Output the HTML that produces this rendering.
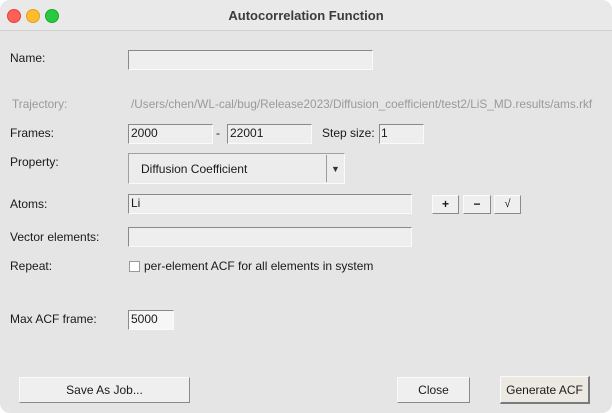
<!DOCTYPE html>
<html><head><meta charset="utf-8"><style>
html,body{margin:0;padding:0;width:612px;height:413px;background:#fff;overflow:hidden}
body{font-family:"Liberation Sans",sans-serif;font-size:12px;color:#1a1a1a}
.win{position:absolute;left:0;top:0;width:612px;height:413px;background:#e5e5e5;border-radius:10px;overflow:hidden}
.tb{position:absolute;left:0;top:0;width:612px;height:30px;background:#e9e9e9;border-bottom:1px solid #cfcfcf}
.dot{position:absolute;top:9px;width:12px;height:12px;border-radius:50%}
.title{position:absolute;left:0;width:612px;top:8px;text-align:center;font-weight:bold;font-size:13px;color:#3b3b3b}
.a{position:absolute;white-space:nowrap}
.in{position:absolute;background:#eeeeee;border:1px solid #fafafa;border-top-color:#8a8a8a;border-left-color:#8a8a8a;box-sizing:border-box;padding-left:2px;line-height:17px;font-size:12px}
.btn{position:absolute;background:#efefef;border:1px solid #fafafa;border-right-color:#8a8a8a;border-bottom-color:#8a8a8a;box-sizing:border-box;text-align:center;font-size:12px}
</style></head><body>
<div class="win">
<div class="tb">
<div class="dot" style="left:7px;background:#fe5f57;border:0.5px solid #e0443e"></div>
<div class="dot" style="left:26px;background:#febc2e;border:0.5px solid #dea123"></div>
<div class="dot" style="left:45px;background:#28c840;border:0.5px solid #1aab29"></div>
<div class="title">Autocorrelation Function</div>
</div>

<div class="a" style="left:10px;top:51px">Name:</div>
<div class="in" style="left:128px;top:50px;width:245px;height:20px"></div>

<div class="a" style="left:12px;top:97px;color:#9a9a9a;font-size:11.8px">Trajectory:</div>
<div class="a" style="left:131px;top:97px;color:#9a9a9a;font-size:11.8px">/Users/chen/WL-cal/bug/Release2023/Diffusion_coefficient/test2/LiS_MD.results/ams.rkf</div>

<div class="a" style="left:10px;top:126px">Frames:</div>
<div class="in" style="left:128px;top:124px;width:85px;height:20px">2000</div>
<div class="a" style="left:216px;top:126px">-</div>
<div class="in" style="left:227px;top:124px;width:85px;height:20px">22001</div>
<div class="a" style="left:322px;top:126px">Step size:</div>
<div class="in" style="left:379px;top:124px;width:45px;height:20px;padding-left:1px">1</div>

<div class="a" style="left:10px;top:155px">Property:</div>
<div class="btn" style="left:128px;top:153px;width:217px;height:31px;border-color:#a0a0a0;border-right-color:#fafafa;border-bottom-color:#fafafa;border-top-color:#a0a0a0;background:#ececec"></div>
<div class="a" style="left:141px;top:162px">Diffusion Coefficient</div>
<div style="position:absolute;left:326px;top:155px;width:1px;height:27px;background:#9a9a9a"></div>
<div class="a" style="left:331px;top:164px;font-size:9px;color:#333">▼</div>

<div class="a" style="left:10px;top:197px">Atoms:</div>
<div class="in" style="left:128px;top:194px;width:284px;height:20px">Li</div>
<div class="btn" style="left:432px;top:195px;width:27px;height:19px;font-weight:bold;line-height:16px">+</div>
<div class="btn" style="left:463px;top:195px;width:28px;height:19px;font-weight:bold;line-height:16px">−</div>
<div class="btn" style="left:494px;top:195px;width:27px;height:19px;line-height:17px;font-size:11px">√</div>

<div class="a" style="left:10px;top:230px">Vector elements:</div>
<div class="in" style="left:128px;top:227px;width:284px;height:20px"></div>

<div class="a" style="left:10px;top:259px">Repeat:</div>
<div style="position:absolute;left:129px;top:261px;width:11px;height:11px;background:#fff;border:1px solid #999;box-sizing:border-box"></div>
<div class="a" style="left:144px;top:259px">per-element ACF for all elements in system</div>

<div class="a" style="left:10px;top:312px">Max ACF frame:</div>
<div class="in" style="left:128px;top:310px;width:46px;height:20px;background:#f6f6f6">5000</div>

<div class="btn" style="left:19px;top:377px;width:171px;height:26px;line-height:24px">Save As Job...</div>
<div class="btn" style="left:397px;top:377px;width:73px;height:26px;line-height:24px">Close</div>
<div class="btn" style="left:500px;top:376px;width:90px;height:28px;line-height:26px;background:#ece9e2;border-right:2px solid #7a7a7a;border-bottom:2px solid #7a7a7a">Generate ACF</div>
</div>
</body></html>
